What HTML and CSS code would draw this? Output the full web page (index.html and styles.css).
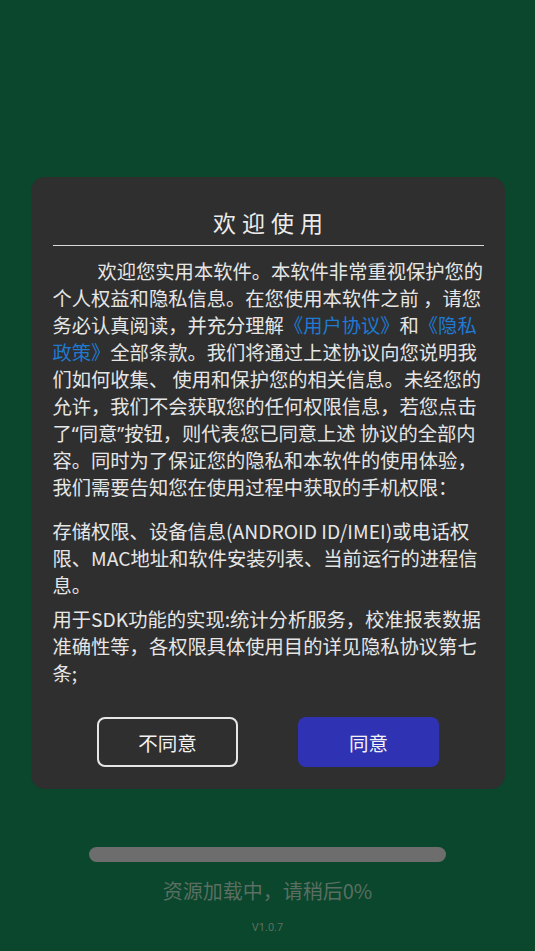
FILE: index.html
```html
<!DOCTYPE html>
<html lang="zh-CN">
<head>
  <meta charset="UTF-8">
  <meta name="viewport" content="width=device-width, initial-scale=1.0">
  <link rel="stylesheet" href="styles.css">
  <title>欢迎使用</title>
</head>
<body>
  <div class="dialog">
    <h1 class="title">欢迎使用</h1>
    <p class="text intro">欢迎您实用本软件。本软件非常重视保护您的个人权益和隐私信息。在您使用本软件之前 ，请您务必认真阅读，并充分理解<a href="#">《用户协议》</a>和<a href="#">《隐私政策》</a>全部条款。我们将通过上述协议向您说明我们如何收集、 使用和保护您的相关信息。未经您的允许，我们不会获取您的任何权限信息，若您点击了<span class="q">“</span>同意<span class="q">”</span>按钮，则代表您已同意上述 协议的全部内容。同时为了保证您的隐私和本软件的使用体验，我们需要告知您在使用过程中获取的手机权限：</p>
    <p class="text perm">存储权限、设备信息(ANDROID ID/IMEI)或电话权限、MAC地址和软件安装列表、当前运行的进程信息。</p>
    <p class="text use">用于SDK功能的实现:统计分析服务，校准报表数据准确性等，各权限具体使用目的详见隐私协议第七条;</p>
    <div class="buttons">
      <button class="btn btn-no">不同意</button>
      <button class="btn btn-yes">同意</button>
    </div>
  </div>
  <div class="loading">
    <div class="bar"></div>
    <p class="status">资源加载中，请稍后0%</p>
    <small class="version">V1.0.7</small>
  </div>
</body>
</html>
```

FILE: styles.css
```css
  body {
    margin: 0;
    width: 535px;
    height: 951px;
    overflow: hidden;
    background-color: #0a472c;
    font-family: "Noto Sans CJK SC", "Noto Sans", sans-serif;
    display: flex;
    flex-direction: column;
    align-items: center;
  }

  .dialog {
    margin-top: 177px;
    width: 474px;
    height: 612px;
    box-sizing: border-box;
    padding: 28px 19px 0 22px;
    background-color: #2f2f2f;
    border-radius: 14px;
  }

  .title {
    margin: 0 2px 0 0;
    padding-bottom: 6px;
    height: 34px;
    line-height: 34px;
    font-size: 23px;
    font-weight: normal;
    letter-spacing: 6px;
    text-indent: 6px;
    text-align: center;
    color: #ececec;
    border-bottom: 1px solid #d8d8d8;
  }

  .text {
    margin: 0;
    font-size: 19.3px;
    line-height: 27px;
    color: #e6e6e6;
  }

  .intro {
    margin-top: 12px;
    text-indent: 45px;
  }

  .intro a {
    color: #2079d2;
    text-decoration: none;
  }

  .q {
    font-family: "Noto Sans", sans-serif;
  }

  .perm {
    margin-top: 17px;
  }

  .use {
    margin-top: 7px;
  }

  .buttons {
    display: flex;
    justify-content: center;
    gap: 60px;
    margin-top: 30px;
    margin-right: 2px;
  }

  .btn {
    width: 141px;
    height: 50px;
    box-sizing: border-box;
    border-radius: 8px;
    font-family: "Noto Sans CJK SC", sans-serif;
    font-size: 19.5px;
    color: #f2f2f2;
  }

  .btn-no {
    background-color: #2f2f2f;
    border: 2px solid #e6e6e6;
  }

  .btn-yes {
    background-color: #2f33b3;
    border: none;
  }

  .loading {
    display: flex;
    flex-direction: column;
    align-items: center;
    margin-top: 58px;
  }

  .bar {
    width: 357px;
    height: 15px;
    border-radius: 8px;
    background-color: #6d6d6d;
  }

  .status {
    margin: 15px 0 0 0;
    font-size: 20px;
    line-height: 28px;
    color: #5b6e63;
  }

  .version {
    margin-top: 16px;
    font-family: "Roboto", sans-serif;
    font-size: 11px;
    line-height: 14px;
    color: #5b6e63;
  }
```
